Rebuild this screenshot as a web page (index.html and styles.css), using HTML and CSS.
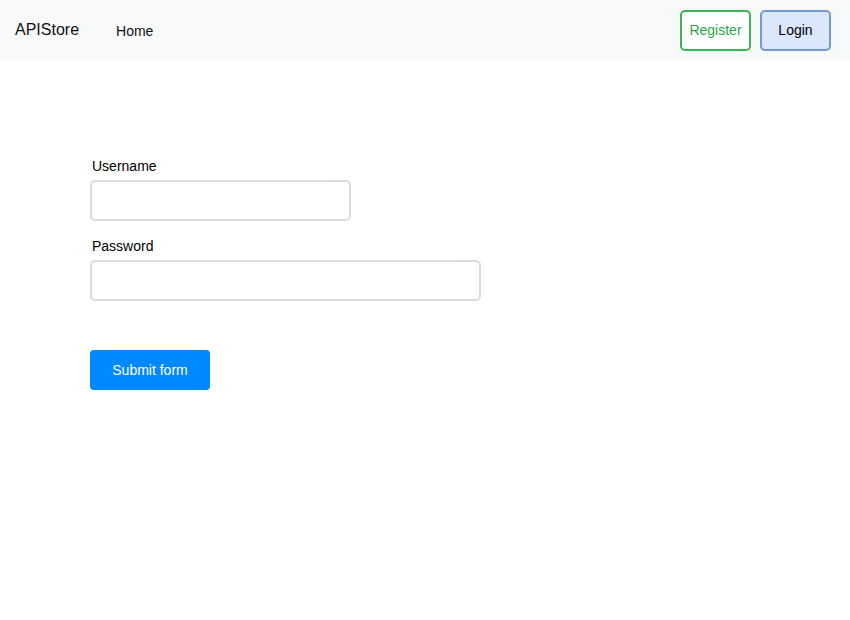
FILE: index.html
```html
<!DOCTYPE html>
<html lang="en">
<head>
    <meta charset="UTF-8">
    <meta name="viewport" content="width=device-width, initial-scale=1.0">
    <title>APIStore - Login</title>
    <link rel="stylesheet" href="styles.css">
</head>
<body>
    <nav class="navbar">
        <a class="brand" href="#">APIStore</a>
        <a class="nav-link" href="#">Home</a>
        <div class="nav-actions">
            <button class="btn-register">Register</button>
            <button class="btn-login">Login</button>
        </div>
    </nav>

    <main class="content">
        <form class="login-form" onsubmit="return false;">
            <label for="username">Username</label>
            <input type="text" id="username" class="field-short">
            <label for="password">Password</label>
            <input type="password" id="password" class="field-long">
            <button type="submit" class="btn-submit">Submit form</button>
        </form>
    </main>
</body>
</html>
```

FILE: styles.css
```css
body {
    font-family: "Liberation Sans", Arial, sans-serif;
    margin: 0;
    background-color: #ffffff;
    color: #000000;
}
.navbar {
    display: flex;
    align-items: center;
    height: 60px;
    padding: 0 19px 0 15px;
    background-color: #f8f9fa;
}
.brand {
    font-size: 16px;
    color: #111;
    text-decoration: none;
}
.nav-link {
    font-size: 14px;
    color: #111;
    text-decoration: none;
    margin-left: 37px;
    margin-top: 2px;
}
.nav-actions {
    margin-left: auto;
    display: flex;
    gap: 9px;
}
.nav-actions button {
    font-family: inherit;
    font-size: 14px;
    height: 41px;
    border-radius: 5px;
    padding: 0;
    cursor: pointer;
}
.btn-register {
    width: 71px;
    background-color: #ffffff;
    color: #28a745;
    border: 2px solid #3cb553;
}
.btn-login {
    width: 71px;
    background-color: #dbe8fb;
    color: #000;
    border: 2px solid #7399d8;
}
.content {
    padding: 96px 0 0 90px;
}
.login-form {
    display: flex;
    flex-direction: column;
    align-items: flex-start;
}
.login-form label {
    font-size: 14px;
    line-height: 20px;
    padding-left: 2px;
    margin-bottom: 4px;
}
.login-form input {
    height: 41px;
    box-sizing: border-box;
    border: 2px solid #d8dce1;
    border-radius: 5px;
    font-size: 14px;
    padding: 0 10px;
    margin-bottom: 15px;
}
.field-short {
    width: 261px;
}
.field-long {
    width: 391px;
}
.btn-submit {
    margin-top: 34px;
    width: 120px;
    height: 40px;
    border: none;
    border-radius: 4px;
    background-color: #0088ff;
    color: #ffffff;
    font-family: inherit;
    font-size: 14px;
    cursor: pointer;
}
```
